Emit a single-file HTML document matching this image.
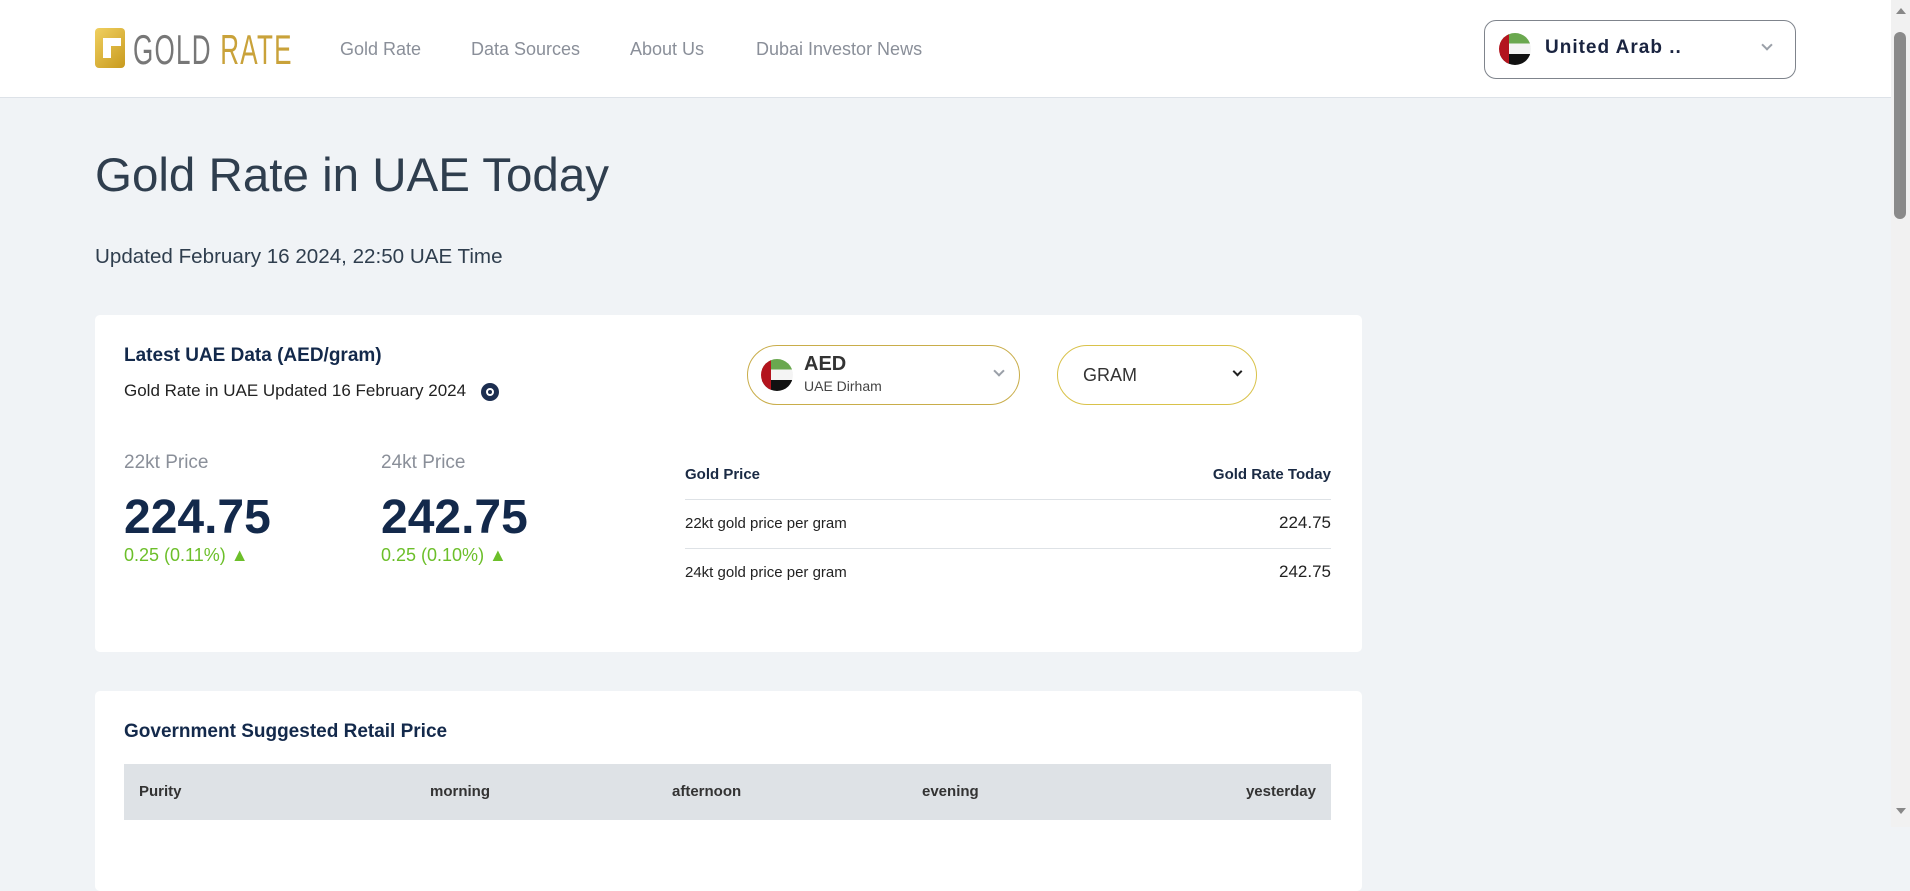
<!DOCTYPE html>
<html><head><meta charset="utf-8"><style>
*{margin:0;padding:0;box-sizing:border-box}
body{width:1910px;height:827px;overflow:hidden;background:#f0f3f6;font-family:"Liberation Sans",sans-serif;position:relative;color:#1a2a44}
.abs{position:absolute;white-space:nowrap}
header{position:absolute;left:0;top:0;width:1891px;height:98px;background:#fff;border-bottom:1px solid #dde2e8}
.nav{font-size:18px;color:#8a8f99;top:39px}
.card{position:absolute;background:#fff;border-radius:5px}
.flag{position:absolute;border-radius:50%;overflow:hidden;background:linear-gradient(to bottom,#6aa84f 0 33%,#f4f4f4 33% 66%,#111 66%)}
.flag:before{content:"";position:absolute;left:0;top:0;width:32%;height:100%;background:#b3141e}
.chev{position:absolute;width:9px;height:9px;border-right:2px solid #9aa0a8;border-bottom:2px solid #9aa0a8;transform:rotate(45deg)}
.scroll{position:absolute;right:0;top:0;width:19px;height:827px;background:#f1f1f1}
</style></head><body>
<header>
 <div class="abs" style="left:95px;top:28px;width:30px;height:40px;background:linear-gradient(135deg,#f0d060,#c89a1e);border-radius:4px"></div>
 <div class="abs" style="left:103px;top:38px;width:18px;height:8px;background:#fff"></div>
 <div class="abs" style="left:103px;top:46px;width:8px;height:12px;background:#fff"></div>
 <div class="abs" style="left:133px;top:26px;font-size:42px;letter-spacing:2px;transform:scaleX(0.62);transform-origin:left;font-family:'Liberation Sans Narrow','Liberation Sans',sans-serif"><span style="color:#777">GOLD</span> <span style="color:#c9a23a">RATE</span></div>
 <div class="abs nav" style="left:340px">Gold Rate</div>
 <div class="abs nav" style="left:471px">Data Sources</div>
 <div class="abs nav" style="left:630px">About Us</div>
 <div class="abs nav" style="left:756px">Dubai Investor News</div>
 <div class="abs" style="left:1484px;top:20px;width:312px;height:59px;border:1px solid #7f848c;border-radius:12px">
  <div class="flag" style="left:14px;top:12px;width:32px;height:32px"></div>
  <div class="abs" style="left:60px;top:16px;font-size:19px;font-weight:bold;letter-spacing:1px;color:#1a2440">United Arab ..</div>
  <div class="chev" style="left:278px;top:20px;width:8px;height:8px"></div>
 </div>
</header>
<div class="scroll"><div class="abs" style="left:5px;top:8px;border:5px solid transparent;border-bottom:6px solid #888;border-top:0"></div><div class="abs" style="left:3px;top:32px;width:12px;height:187px;background:#8a8a8a;border-radius:6px"></div><div class="abs" style="left:5px;top:808px;border:5px solid transparent;border-top:6px solid #888;border-bottom:0"></div></div>

<div class="abs" style="left:95px;top:148px;font-size:47.5px;color:#2f3e4e">Gold Rate in UAE Today</div>
<div class="abs" style="left:95px;top:245px;font-size:20.6px;color:#2f3e4e">Updated February 16 2024, 22:50 UAE Time</div>

<div class="card" style="left:95px;top:315px;width:1267px;height:337px">
 <div class="abs" style="left:29px;top:30px;font-size:19px;font-weight:bold;color:#13294b">Latest UAE Data (AED/gram)</div>
 <div class="abs" style="left:29px;top:66px;font-size:17px;color:#222">Gold Rate in UAE Updated 16 February 2024</div>
 <div class="abs" style="left:386px;top:68px;width:18px;height:18px;border-radius:50%;background:#1c2e50"><div class="abs" style="left:5px;top:5px;width:8px;height:8px;border:2px solid #fff;border-radius:50%"></div></div>
 <div class="abs" style="left:29px;top:137px;font-size:19px;color:#8a8f99">22kt Price</div>
 <div class="abs" style="left:286px;top:137px;font-size:19px;color:#8a8f99">24kt Price</div>
 <div class="abs" style="left:29px;top:175px;font-size:48px;font-weight:bold;color:#13294b">224.75</div>
 <div class="abs" style="left:286px;top:175px;font-size:48px;font-weight:bold;color:#13294b">242.75</div>
 <div class="abs" style="left:29px;top:230px;font-size:18px;color:#6cbf2a">0.25 (0.11%) &#9650;</div>
 <div class="abs" style="left:286px;top:230px;font-size:18px;color:#6cbf2a">0.25 (0.10%) &#9650;</div>

 <div class="abs" style="left:652px;top:30px;width:273px;height:60px;border:1px solid #c9ad4a;border-radius:30px">
  <div class="flag" style="left:13px;top:13px;width:32px;height:32px"></div>
  <div class="abs" style="left:56px;top:7px;font-size:20px;font-weight:bold;color:#333">AED</div>
  <div class="abs" style="left:56px;top:32px;font-size:14px;color:#444">UAE Dirham</div>
  <div class="chev" style="left:247px;top:21px;width:8px;height:8px"></div>
 </div>
 <div class="abs" style="left:962px;top:30px;width:200px;height:60px;border:1px solid #d9c24a;border-radius:30px">
  <div class="abs" style="left:25px;top:19px;font-size:18px;color:#333">GRAM</div>
  <div class="chev" style="left:176px;top:22px;width:7px;height:7px;border-color:#222"></div>
 </div>

 <div class="abs" style="left:590px;top:151px;font-size:15px;font-weight:bold;color:#1a2a44">Gold Price</div>
 <div class="abs" style="right:31px;top:151px;font-size:15px;font-weight:bold;color:#1a2a44">Gold Rate Today</div>
 <div class="abs" style="left:590px;top:184px;width:646px;height:1px;background:#dee2e6"></div>
 <div class="abs" style="left:590px;top:200px;font-size:15px;color:#222">22kt gold price per gram</div>
 <div class="abs" style="right:31px;top:198px;font-size:17px;color:#222">224.75</div>
 <div class="abs" style="left:590px;top:233px;width:646px;height:1px;background:#dee2e6"></div>
 <div class="abs" style="left:590px;top:249px;font-size:15px;color:#222">24kt gold price per gram</div>
 <div class="abs" style="right:31px;top:247px;font-size:17px;color:#222">242.75</div>
</div>

<div class="card" style="left:95px;top:691px;width:1267px;height:200px">
 <div class="abs" style="left:29px;top:30px;font-size:19px;font-weight:bold;color:#13294b">Government Suggested Retail Price</div>
 <div class="abs" style="left:29px;top:73px;width:1207px;height:56px;background:#dee2e6">
  <div class="abs" style="left:15px;top:19px;font-size:15px;font-weight:bold;color:#333">Purity</div>
  <div class="abs" style="left:306px;top:19px;font-size:15px;font-weight:bold;color:#333">morning</div>
  <div class="abs" style="left:548px;top:19px;font-size:15px;font-weight:bold;color:#333">afternoon</div>
  <div class="abs" style="left:798px;top:19px;font-size:15px;font-weight:bold;color:#333">evening</div>
  <div class="abs" style="right:15px;top:19px;font-size:15px;font-weight:bold;color:#333">yesterday</div>
 </div>
</div>
</body></html>
